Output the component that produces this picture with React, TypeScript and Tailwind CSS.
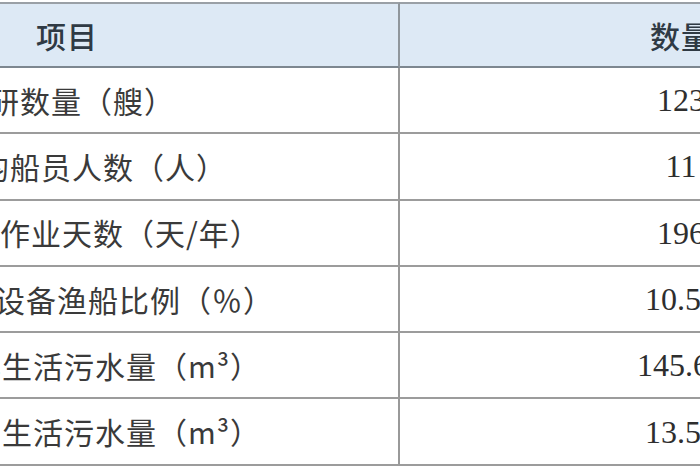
const rows = [
  { label: "调研数量（艘）", indent: "pl-[222px]", value: "123" },
  { label: "平均船员人数（人）", indent: "pl-[212px]", value: "11" },
  { label: "年均作业天数（天/年）", indent: "pl-[202px]", value: "196" },
  { label: "配套设备渔船比例（％）", indent: "pl-[197px]", value: "10.52" },
  { label: "渔船年生活污水量（m³）", indent: "pl-[173px]", value: "145.62" },
  { label: "单船日生活污水量（m³）", indent: "pl-[173px]", value: "13.52" },
];

const cjk = "font-['Noto_Sans_CJK_SC',sans-serif]";
const serif = "font-['Liberation_Serif','Noto_Sans_CJK_SC',serif]";

export default function App() {
  return (
    <div className="w-[700px] h-[470px] overflow-hidden bg-white pt-[2px]">
      <div className="-ml-[264px] w-[1226px] grid grid-cols-[664px_562px]">
        <div
          className={`h-[66px] flex items-center justify-center border-t-2 border-b-2 border-r-2 border-t-[#9aa0a6] border-b-[#7d8790] border-r-[#8f969c] bg-[#dde9f5] text-[30px] font-medium text-[#2f3a44] tracking-[1px] ${cjk}`}
        >
          项目
        </div>
        <div
          className={`h-[66px] flex items-center justify-center border-t-2 border-b-2 border-t-[#9aa0a6] border-b-[#7d8790] bg-[#dde9f5] text-[30px] font-medium text-[#2f3a44] tracking-[1px] ${cjk}`}
        >
          数量
        </div>
        {rows.map((row) => (
          <div key={row.label} className="contents">
            <div
              className={`h-[66.3px] flex items-center border-b-2 border-r-2 border-b-[#9c9c9c] border-r-[#999999] whitespace-nowrap text-[30px] tracking-[1px] text-[#3a3a3a] ${row.indent} ${cjk}`}
            >
              {row.label}
            </div>
            <div
              className={`h-[66.3px] flex items-center justify-center border-b-2 border-b-[#9c9c9c] text-[32px] text-[#2e2e2e] ${serif}`}
            >
              {row.value}
            </div>
          </div>
        ))}
      </div>
    </div>
  );
}
